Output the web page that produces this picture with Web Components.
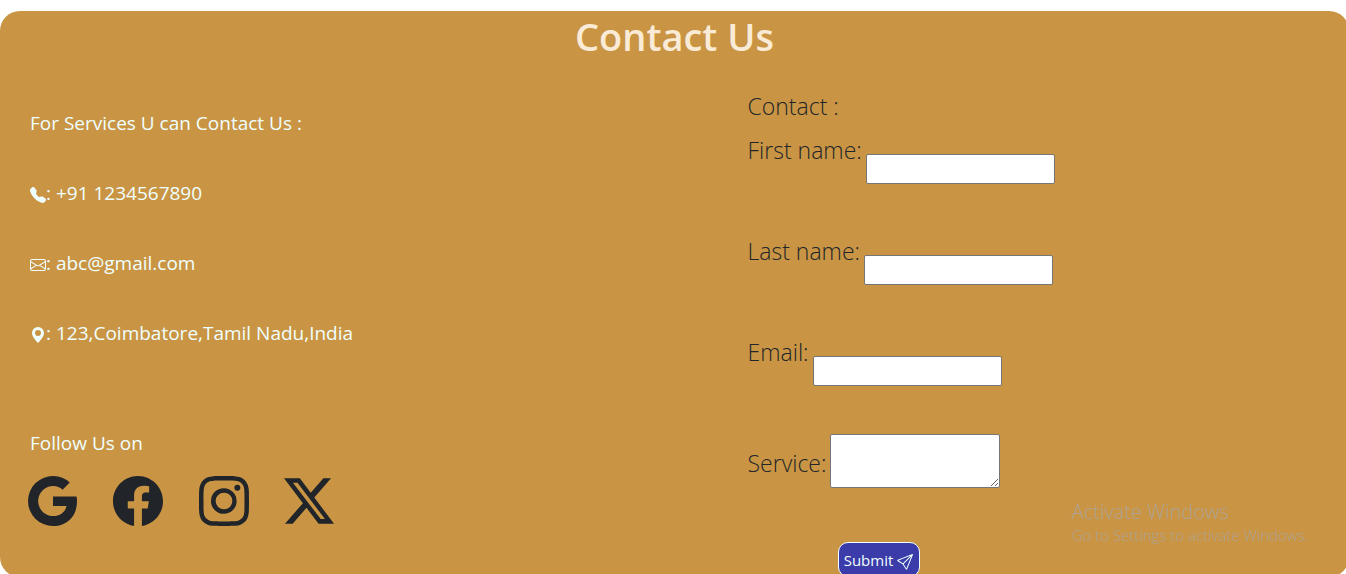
<!DOCTYPE html>
<html lang="en">
<head>
<meta charset="utf-8">
<meta name="viewport" content="width=device-width, initial-scale=1">
<title>Contact Us</title>
<style>
  html { overflow: hidden; }
  body { margin: 0; background: #fff; color: #212529; font-family: "Segoe UI", "Open Sans", sans-serif; }
</style>
</head>
<body>
<contact-section>
  <contact-details slot="details"></contact-details>
  <contact-form slot="form"></contact-form>
</contact-section>
<activation-notice></activation-notice>

<script>
const ICONS = {
  phone: 'M1.885.511a1.745 1.745 0 0 1 2.61.163L6.29 2.98c.329.423.445.974.315 1.494l-.547 2.19a.68.68 0 0 0 .178.643l2.457 2.457a.68.68 0 0 0 .644.178l2.189-.547a1.75 1.75 0 0 1 1.494.315l2.306 1.794c.829.645.905 1.87.163 2.611l-1.034 1.034c-.74.74-1.846 1.065-2.877.702a18.6 18.6 0 0 1-7.01-4.42 18.6 18.6 0 0 1-4.42-7.009c-.362-1.03-.037-2.137.703-2.877z',
  envelope: 'M0 4a2 2 0 0 1 2-2h12a2 2 0 0 1 2 2v8a2 2 0 0 1-2 2H2a2 2 0 0 1-2-2zm2-1a1 1 0 0 0-1 1v.217l7 4.2 7-4.2V4a1 1 0 0 0-1-1zm13 2.383-4.708 2.825L15 11.105zm-.034 6.876-5.64-3.471L8 9.583l-1.326-.795-5.64 3.47A1 1 0 0 0 2 13h12a1 1 0 0 0 .966-.741M1 11.105l4.708-2.897L1 5.383z',
  pin: 'M8 16s6-5.686 6-10A6 6 0 0 0 2 6c0 4.314 6 10 6 10m0-7a3 3 0 1 1 0-6 3 3 0 0 1 0 6',
  google: 'M15.545 6.558a9.4 9.4 0 0 1 .139 1.626c0 2.434-.87 4.492-2.384 5.885h.002C11.978 15.292 10.158 16 8 16A8 8 0 1 1 8 0a7.7 7.7 0 0 1 5.352 2.082l-2.284 2.284A4.35 4.35 0 0 0 8 3.166c-2.087 0-3.86 1.408-4.492 3.304a4.8 4.8 0 0 0 0 3.063h.003c.635 1.893 2.405 3.301 4.492 3.301 1.078 0 2.004-.276 2.722-.764h-.003a3.7 3.7 0 0 0 1.599-2.431H8v-3.08z',
  facebook: 'M16 8.049c0-4.446-3.582-8.05-8-8.05C3.58 0-.002 3.603-.002 8.05c0 4.017 2.926 7.347 6.75 7.951v-5.625h-2.03V8.05H6.75V6.275c0-2.017 1.195-3.131 3.022-3.131.876 0 1.791.157 1.791.157v1.98h-1.009c-.993 0-1.303.621-1.303 1.258v1.51h2.218l-.354 2.326H9.25V16c3.824-.604 6.75-3.934 6.75-7.951',
  instagram: 'M8 0C5.829 0 5.556.01 4.703.048 3.85.088 3.269.222 2.76.42a3.9 3.9 0 0 0-1.417.923A3.9 3.9 0 0 0 .42 2.76C.222 3.268.087 3.85.048 4.7.01 5.555 0 5.827 0 8.001c0 2.172.01 2.444.048 3.297.04.852.174 1.433.372 1.942.205.526.478.972.923 1.417.444.445.89.719 1.416.923.51.198 1.09.333 1.942.372C5.555 15.99 5.827 16 8 16s2.444-.01 3.298-.048c.851-.04 1.434-.174 1.943-.372a3.9 3.9 0 0 0 1.416-.923c.445-.445.718-.891.923-1.417.197-.509.332-1.09.372-1.942C15.99 10.445 16 10.173 16 8s-.01-2.445-.048-3.299c-.04-.851-.175-1.433-.372-1.941a3.9 3.9 0 0 0-.923-1.417A3.9 3.9 0 0 0 13.24.42c-.51-.198-1.092-.333-1.943-.372C10.443.01 10.172 0 7.998 0zm-.717 1.442h.718c2.136 0 2.389.007 3.232.046.78.035 1.204.166 1.486.275.373.145.64.319.92.599s.453.546.598.92c.11.281.24.705.275 1.485.039.843.047 1.096.047 3.231s-.008 2.389-.047 3.232c-.035.78-.166 1.203-.275 1.485a2.5 2.5 0 0 1-.599.919c-.28.28-.546.453-.92.598-.28.11-.704.24-1.485.276-.843.038-1.096.047-3.232.047s-2.39-.009-3.233-.047c-.78-.036-1.203-.166-1.485-.276a2.5 2.5 0 0 1-.92-.598 2.5 2.5 0 0 1-.6-.92c-.109-.281-.24-.705-.275-1.485-.038-.843-.046-1.096-.046-3.233s.008-2.388.046-3.231c.036-.78.166-1.204.276-1.486.145-.373.319-.64.599-.92s.546-.453.92-.598c.282-.11.705-.24 1.485-.276.738-.034 1.024-.044 2.515-.045zm4.988 1.328a.96.96 0 1 0 0 1.92.96.96 0 0 0 0-1.92m-4.27 1.122a4.109 4.109 0 1 0 0 8.217 4.109 4.109 0 0 0 0-8.217m0 1.441a2.667 2.667 0 1 1 0 5.334 2.667 2.667 0 0 1 0-5.334',
  x: 'M12.6.75h2.454l-5.36 6.142L16 15.25h-4.937l-3.867-5.07-4.425 5.07H.316l5.733-6.57L0 .75h5.063l3.495 4.633L12.601.75Zm-.86 13.028h1.36L4.323 2.145H2.865z',
  send: 'M15.854.146a.5.5 0 0 1 .11.54l-5.819 14.547a.75.75 0 0 1-1.329.124l-3.178-4.995L.643 7.184a.75.75 0 0 1 .124-1.33L15.314.037a.5.5 0 0 1 .54.11ZM6.636 10.07l2.761 4.338L14.13 2.576zm6.787-8.201L1.591 6.602l4.339 2.76z'
};

function define(name, html, setup) {
  customElements.define(name, class extends HTMLElement {
    constructor() {
      super();
      this.attachShadow({ mode: 'open' });
    }
    connectedCallback() {
      this.shadowRoot.innerHTML = html;
      if (setup) setup(this, this.shadowRoot);
    }
  });
}

define('bs-icon', `
  <style>
    :host { display: inline-block; width: 16px; height: 16px; }
    svg { display: block; width: 100%; height: 100%; fill: currentColor; }
  </style>
  <svg viewBox="0 0 16 16" aria-hidden="true"><path/></svg>`,
  (el, root) => root.querySelector('path').setAttribute('d', ICONS[el.getAttribute('name')] || ''));

define('contact-section', `
  <style>
    :host { display: block; margin: 11px -3px 0 0; padding-top: 1px; border-radius: 20px; background: #c99544; }
    h1 { margin: 0 0 2px; text-align: center; font-size: 38px; line-height: 48px; font-weight: 600; color: antiquewhite; }
    .columns { display: grid; grid-template-columns: 1fr 1fr; }
  </style>
  <h1>Contact Us</h1>
  <div class="columns"><slot name="details"></slot><slot name="form"></slot></div>`);

define('contact-line', `
  <style>
    :host { display: flex; align-items: center; }
    bs-icon { margin-top: 4px; }
    span { white-space: pre; }
  </style>
  <span>: <slot></slot></span>`,
  (el, root) => {
    const icon = document.createElement('bs-icon');
    icon.setAttribute('name', el.getAttribute('icon'));
    root.querySelector('span').before(icon);
  });

define('social-link', `
  <style>
    :host { display: block; }
    a { display: block; color: #212529; }
    bs-icon { display: block; width: 50px; height: 50px; }
  </style>
  <a href="#"></a>`,
  (el, root) => {
    const a = root.querySelector('a');
    a.setAttribute('aria-label', el.getAttribute('label'));
    a.innerHTML = `<bs-icon name="${el.getAttribute('icon')}"></bs-icon>`;
  });

define('contact-details', `
  <style>
    :host { display: block; padding: 46px 28px 0; color: azure; font-size: 19px; line-height: 30px; }
    .lines { display: grid; gap: 40px; padding-left: 2px; }
    p { margin: 0; }
    .follow { margin: 80px 0 18px 2px; }
    nav { display: flex; justify-content: space-between; width: 306px; }
  </style>
  <div class="lines">
    <p>For Services U can Contact Us :</p>
    <contact-line icon="phone">+91 1234567890</contact-line>
    <contact-line icon="envelope">abc@gmail.com</contact-line>
    <contact-line icon="pin">123,Coimbatore,Tamil Nadu,India</contact-line>
  </div>
  <p class="follow">Follow Us on</p>
  <nav aria-label="Social media">
    <social-link icon="google" label="Google"></social-link>
    <social-link icon="facebook" label="Facebook"></social-link>
    <social-link icon="instagram" label="Instagram"></social-link>
    <social-link icon="x" label="X"></social-link>
  </nav>`);

define('form-field', `
  <style>
    :host { display: flex; align-items: flex-start; gap: 4px; }
    label { padding-top: 2px; }
    input, textarea { box-sizing: border-box; margin: 0; border: 1px solid #767676; border-radius: 2px; background: #fff; font: inherit; font-size: 16px; line-height: 24px; }
    input { width: 189px; height: 30px; margin-top: 24px; padding: 1px 2px; }
    textarea { width: 170px; height: 54px; margin-top: 1px; padding: 2px; resize: both; }
    :host([multiline]) label { padding-top: 12px; }
  </style>
  <label for="control"></label>`,
  (el, root) => {
    root.querySelector('label').textContent = el.getAttribute('label');
    const control = document.createElement(el.hasAttribute('multiline') ? 'textarea' : 'input');
    control.id = 'control';
    if (control.localName === 'input') control.type = el.getAttribute('type') || 'text';
    root.append(control);
  });

define('submit-button', `
  <style>
    :host { display: block; }
    button { display: flex; align-items: center; justify-content: center; gap: 4px; width: 82px; height: 35px; padding: 0; border: 1px solid azure; border-radius: 10px; background: #3b3ba9; color: azure; font: inherit; font-size: 15px; line-height: 24px; }
    bs-icon { margin-top: 4px; }
  </style>
  <button type="button"><slot></slot><bs-icon name="send"></bs-icon></button>`);

define('contact-form', `
  <style>
    :host { display: block; padding: 26px 0 0 73px; font-size: 23px; line-height: 36px; font-weight: 350; }
    h2 { margin: 0 0 6px; font: inherit; }
    form { display: grid; gap: 47px; }
    submit-button { margin: 7px 0 0 90px; font-weight: 400; }
  </style>
  <h2>Contact :</h2>
  <form>
    <form-field label="First name:"></form-field>
    <form-field label="Last name:"></form-field>
    <form-field label="Email:" type="email"></form-field>
    <form-field label="Service:" multiline></form-field>
    <submit-button>Submit</submit-button>
  </form>`);

define('activation-notice', `
  <style>
    :host { position: fixed; right: 38px; bottom: 28px; color: #ada396; font-weight: 300; pointer-events: none; }
    p { margin: 0; font-size: 15px; line-height: 22px; }
    .title { font-size: 20px; line-height: 24px; }
  </style>
  <p class="title">Activate Windows</p>
  <p>Go to Settings to activate Windows.</p>`);
</script>
</body>
</html>
